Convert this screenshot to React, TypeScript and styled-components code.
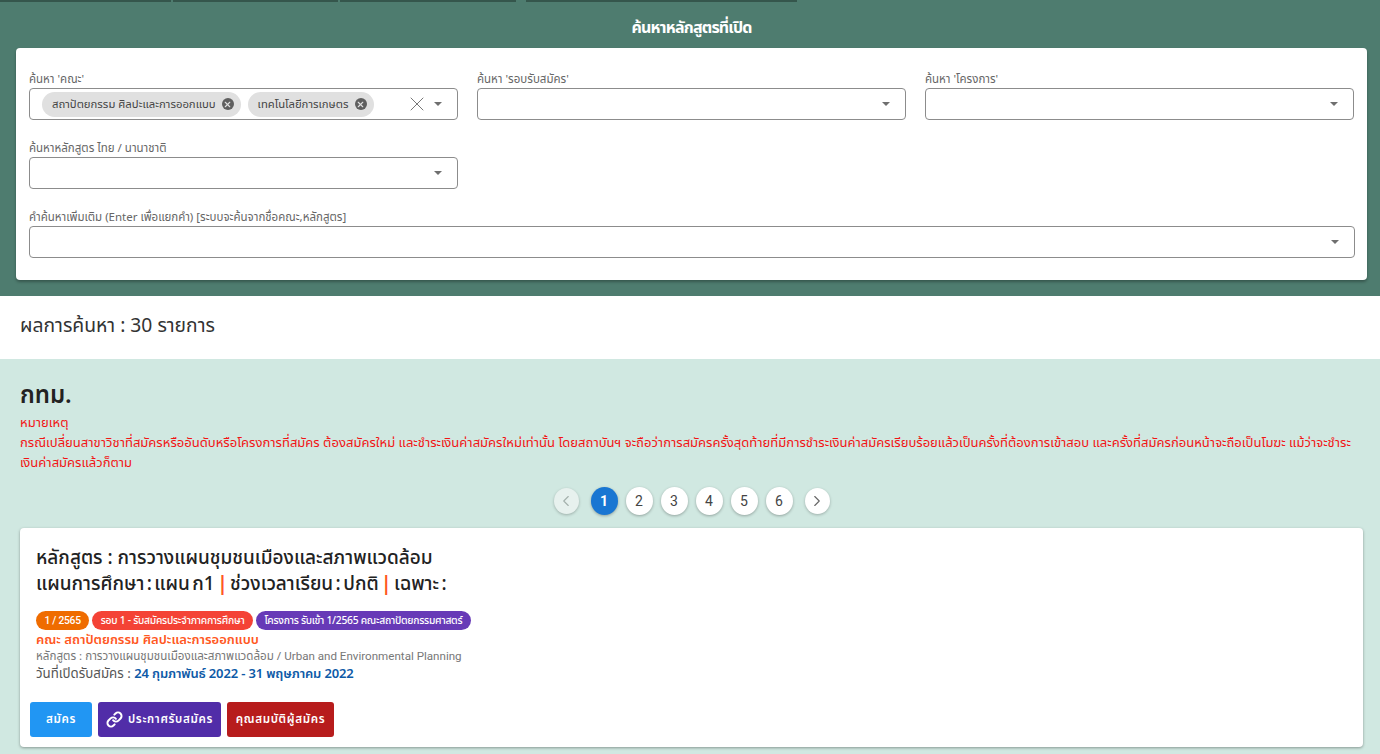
import styled, { createGlobalStyle } from "styled-components";
import { X, Link, ChevronLeft, ChevronRight } from "lucide-react";

const GlobalStyle = createGlobalStyle`
  html, body {
    margin: 0;
    padding: 0;
    background: #d0e8e1;
    overflow: hidden;
    font-family: "Noto Sans", "Noto Sans Thai", "Liberation Sans", sans-serif;
  }
`;

const Page = styled.div`
  width: 1380px;
  height: 754px;
  overflow: hidden;
`;

const SearchPanel = styled.section`
  height: 296px;
  box-sizing: border-box;
  background: #4e7c6f;
  padding: 0 13px 0 16px;
  display: flex;
  flex-direction: column;
`;

const TopTabs = styled.div`
  height: 2px;
  margin-left: -16px;
  display: flex;
  gap: 2px;
`;

const TopTab = styled.div<{ $width: number; $gap?: number }>`
  width: ${(p) => p.$width}px;
  margin-left: ${(p) => p.$gap ?? 0}px;
  background: #35564c;
`;

const PanelTitle = styled.h2`
  margin: 0;
  height: 46px;
  line-height: 50px;
  text-align: center;
  color: #fff;
  font-size: 16px;
  font-weight: 700;
  letter-spacing: -0.8px;
`;

const FilterCard = styled.div`
  height: 232px;
  box-sizing: border-box;
  background: #fff;
  border-radius: 4px;
  padding: 23px 13px 0;
  box-shadow: 0 2px 3px rgba(0, 0, 0, 0.3);
  display: flex;
  flex-direction: column;
  gap: 20px;
`;

const FilterRow = styled.div`
  display: grid;
  grid-template-columns: repeat(3, 429px);
  column-gap: 19px;
`;

const FilterWide = styled.div`
  width: 1326px;
`;

const Field = styled.div`
  display: flex;
  flex-direction: column;
`;

const FieldLabel = styled.label`
  height: 17px;
  line-height: 16px;
  font-size: 11.5px;
  color: #666;
  white-space: nowrap;
`;

const SelectBox = styled.div`
  height: 32px;
  box-sizing: border-box;
  border: 1px solid #8c8c8c;
  border-radius: 4px;
  display: flex;
  align-items: center;
  padding: 0 15px 0 12px;
  gap: 7px;
`;

const Chip = styled.span`
  height: 25px;
  box-sizing: border-box;
  border-radius: 13px;
  background: #e0e0e0;
  color: #444;
  font-size: 11.3px;
  display: inline-flex;
  align-items: center;
  padding: 0 7px 0 10px;
  gap: 6px;
  white-space: nowrap;
`;

const ChipClose = styled.span`
  width: 12px;
  height: 12px;
  border-radius: 50%;
  background: #5f5f5f;
  color: #e0e0e0;
  display: inline-flex;
  align-items: center;
  justify-content: center;
`;

const BoxEnd = styled.div`
  margin-left: auto;
  display: flex;
  align-items: center;
  gap: 5px;
  color: #777;
`;

const Caret = styled.span`
  width: 0;
  height: 0;
  border-left: 4.5px solid transparent;
  border-right: 4.5px solid transparent;
  border-top: 4.5px solid #6f6f6f;
`;

const ResultBar = styled.div`
  height: 63px;
  box-sizing: border-box;
  background: #fff;
  padding: 0 0 3px 20px;
  display: flex;
  align-items: center;
  font-size: 19.3px;
  color: #333;
`;

const ResultSection = styled.section`
  padding: 16px 17px 0 20px;
`;

const Province = styled.h1`
  margin: 0;
  height: 37px;
  line-height: 38px;
  font-size: 24px;
  font-weight: 600;
  color: #222;
`;

const Note = styled.div`
  color: #f21414;
  font-size: 13.05px;
  line-height: 20px;
`;

const Pager = styled.nav`
  height: 28px;
  margin: 15px 0 13px;
  display: flex;
  justify-content: center;
  align-items: center;
  gap: 8px;
`;

const PageButton = styled.button<{ $active?: boolean }>`
  width: 27px;
  height: 28px;
  padding: 0;
  border: 0;
  border-radius: 50%;
  background: ${(p) => (p.$active ? "#1976d2" : "#fff")};
  color: ${(p) => (p.$active ? "#fff" : "#444")};
  box-shadow: 0 1px 3px rgba(0, 0, 0, 0.3);
  font-family: Roboto, sans-serif;
  font-size: 14px;
  font-weight: ${(p) => (p.$active ? 700 : 400)};
  display: inline-flex;
  align-items: center;
  justify-content: center;
`;

const ArrowButton = styled.button<{ $muted?: boolean }>`
  width: 25px;
  height: 26px;
  margin: 0 4px;
  padding: 0;
  border: 0;
  border-radius: 50%;
  background: ${(p) => (p.$muted ? "#e7f1ee" : "#fff")};
  color: ${(p) => (p.$muted ? "#a3b0ac" : "#666")};
  box-shadow: 0 1px 3px rgba(0, 0, 0, 0.25);
  display: inline-flex;
  align-items: center;
  justify-content: center;
`;

const ProgramCard = styled.article`
  height: 219px;
  box-sizing: border-box;
  background: #fff;
  border-radius: 4px;
  box-shadow: 0 1px 3px rgba(0, 0, 0, 0.35);
  padding: 16px 16px 0;
  display: flex;
  flex-direction: column;
`;

const ProgramTitle = styled.h3`
  margin: 0;
  font-size: 19px;
  line-height: 26px;
  font-weight: 500;
  color: #222;
`;

const PlanLine = styled.span`
  word-spacing: -2.5px;
`;

const Divider = styled.span`
  color: #ff5722;
  font-weight: 700;
`;

const ChipRow = styled.div`
  margin-top: 15px;
  display: flex;
  gap: 3px;
`;

const Tag = styled.span<{ $bg: string }>`
  height: 19px;
  line-height: 19px;
  padding: 0 8.5px;
  border-radius: 10px;
  background: ${(p) => p.$bg};
  color: #fff;
  font-size: 10.3px;
  font-weight: 500;
  letter-spacing: -0.27px;
  white-space: nowrap;
`;

const Faculty = styled.div`
  color: #ff5722;
  font-size: 13px;
  font-weight: 600;
  line-height: 18px;
`;

const Course = styled.div`
  color: #777;
  font-size: 11.6px;
  line-height: 16px;
`;

const Latin = styled.span`
  font-family: Roboto, sans-serif;
`;

const Dates = styled.div`
  color: #555;
  font-size: 13.3px;
  line-height: 19px;
`;

const DateValue = styled.span`
  color: #0d5aa7;
  font-size: 13px;
  font-weight: 600;
  letter-spacing: -0.15px;
`;

const Actions = styled.div`
  margin: 19px 0 0 -6px;
  display: flex;
  gap: 6px;
`;

const ActionButton = styled.button<{ $bg: string; $width: number }>`
  width: ${(p) => p.$width}px;
  height: 35px;
  padding: 0;
  border: 0;
  border-radius: 3px;
  background: ${(p) => p.$bg};
  color: #fff;
  font-family: inherit;
  font-size: 11.6px;
  font-weight: 600;
  letter-spacing: 0.65px;
  display: inline-flex;
  align-items: center;
  justify-content: center;
  gap: 5px;
`;

const Select = ({ label, chips, clear }: { label: string; chips?: string[]; clear?: boolean }) => (
  <Field>
    <FieldLabel>{label}</FieldLabel>
    <SelectBox>
      {chips?.map((c) => (
        <Chip key={c}>
          {c}
          <ChipClose>
            <X size={9} strokeWidth={3} />
          </ChipClose>
        </Chip>
      ))}
      <BoxEnd>
        {clear && <X size={24} strokeWidth={1} />}
        <Caret />
      </BoxEnd>
    </SelectBox>
  </Field>
);

export default function App() {
  return (
    <Page>
      <GlobalStyle />
      <SearchPanel>
        <TopTabs>
          <TopTab $width={171} />
          <TopTab $width={165} />
          <TopTab $width={176} />
          <TopTab $width={271} $gap={8} />
        </TopTabs>
        <PanelTitle>ค้นหาหลักสูตรที่เปิด</PanelTitle>
        <FilterCard>
          <FilterRow>
            <Select label="ค้นหา 'คณะ'" chips={["สถาปัตยกรรม ศิลปะและการออกแบบ", "เทคโนโลยีการเกษตร"]} clear />
            <Select label="ค้นหา 'รอบรับสมัคร'" />
            <Select label="ค้นหา 'โครงการ'" />
          </FilterRow>
          <FilterRow>
            <Select label="ค้นหาหลักสูตร ไทย / นานาชาติ" />
          </FilterRow>
          <FilterWide>
            <Select label="คำค้นหาเพิ่มเติม (Enter เพื่อแยกคำ) [ระบบจะค้นจากชื่อคณะ,หลักสูตร]" />
          </FilterWide>
        </FilterCard>
      </SearchPanel>
      <ResultBar>ผลการค้นหา : 30 รายการ</ResultBar>
      <ResultSection>
        <Province>กทม.</Province>
        <Note>
          หมายเหตุ
          <br />
          กรณีเปลี่ยนสาขาวิชาที่สมัครหรืออันดับหรือโครงการที่สมัคร ต้องสมัครใหม่ และชำระเงินค่าสมัครใหม่เท่านั้น โดยสถาบันฯ จะถือว่าการสมัครครั้งสุดท้ายที่มีการชำระเงินค่าสมัครเรียบร้อยแล้วเป็นครั้งที่ต้องการเข้าสอบ และครั้งที่สมัครก่อนหน้าจะถือเป็นโมฆะ แม้ว่าจะชำระเงินค่าสมัครแล้วก็ตาม
        </Note>
        <Pager>
          <ArrowButton $muted>
            <ChevronLeft size={18} strokeWidth={1.5} />
          </ArrowButton>
          <PageButton $active>1</PageButton>
          {[2, 3, 4, 5, 6].map((n) => (
            <PageButton key={n}>{n}</PageButton>
          ))}
          <ArrowButton>
            <ChevronRight size={18} strokeWidth={1.5} />
          </ArrowButton>
        </Pager>
        <ProgramCard>
          <ProgramTitle>
            หลักสูตร : การวางแผนชุมชนเมืองและสภาพแวดล้อม
            <br />
            <PlanLine>
              แผนการศึกษา : แผน ก1 <Divider>|</Divider> ช่วงเวลาเรียน : ปกติ <Divider>|</Divider> เฉพาะ :
            </PlanLine>
          </ProgramTitle>
          <ChipRow>
            <Tag $bg="#ef6c00"><Latin>1 / 2565</Latin></Tag>
            <Tag $bg="#f44336">รอบ 1 - รับสมัครประจำภาคการศึกษา</Tag>
            <Tag $bg="#673ab7">โครงการ รับเข้า 1/2565 คณะสถาปัตยกรรมศาสตร์</Tag>
          </ChipRow>
          <Faculty>คณะ สถาปัตยกรรม ศิลปะและการออกแบบ</Faculty>
          <Course>
            หลักสูตร : การวางแผนชุมชนเมืองและสภาพแวดล้อม / <Latin>Urban and Environmental Planning</Latin>
          </Course>
          <Dates>
            วันที่เปิดรับสมัคร : <DateValue>24 กุมภาพันธ์ 2022 - 31 พฤษภาคม 2022</DateValue>
          </Dates>
          <Actions>
            <ActionButton $bg="#2196f3" $width={62}>สมัคร</ActionButton>
            <ActionButton $bg="#512da8" $width={123}>
              <Link size={17} strokeWidth={2.8} />
              ประกาศรับสมัคร
            </ActionButton>
            <ActionButton $bg="#b71c1c" $width={107}>คุณสมบัติผู้สมัคร</ActionButton>
          </Actions>
        </ProgramCard>
      </ResultSection>
    </Page>
  );
}
